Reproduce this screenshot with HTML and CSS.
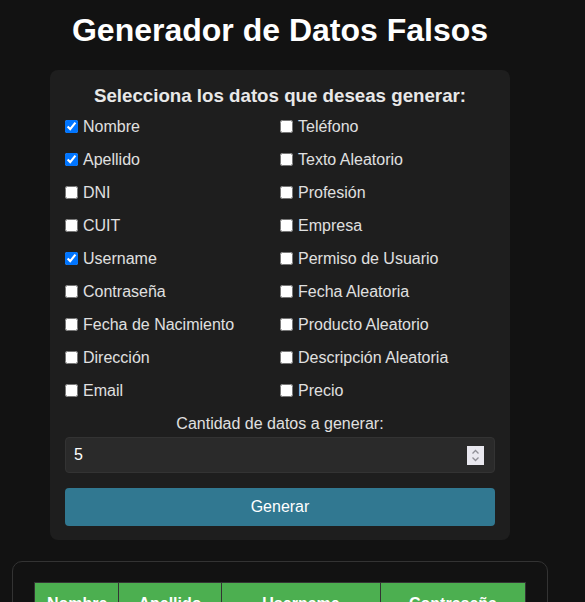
FILE: index.html
```html
<!DOCTYPE html>
<html lang="es">
<head>
<meta charset="utf-8">
<title>Generador de Datos Falsos</title>
<link rel="stylesheet" href="styles.css">
</head>
<body>
<div class="page">
  <h1 class="title">Generador de Datos Falsos</h1>
  <form class="card">
    <h2 class="card-title">Selecciona los datos que deseas generar:</h2>
    <div class="options">
      <label class="opt"><input type="checkbox" checked>Nombre</label>
      <label class="opt"><input type="checkbox">Teléfono</label>
      <label class="opt"><input type="checkbox" checked>Apellido</label>
      <label class="opt"><input type="checkbox">Texto Aleatorio</label>
      <label class="opt"><input type="checkbox">DNI</label>
      <label class="opt"><input type="checkbox">Profesión</label>
      <label class="opt"><input type="checkbox">CUIT</label>
      <label class="opt"><input type="checkbox">Empresa</label>
      <label class="opt"><input type="checkbox" checked>Username</label>
      <label class="opt"><input type="checkbox">Permiso de Usuario</label>
      <label class="opt"><input type="checkbox">Contraseña</label>
      <label class="opt"><input type="checkbox">Fecha Aleatoria</label>
      <label class="opt"><input type="checkbox">Fecha de Nacimiento</label>
      <label class="opt"><input type="checkbox">Producto Aleatorio</label>
      <label class="opt"><input type="checkbox">Dirección</label>
      <label class="opt"><input type="checkbox">Descripción Aleatoria</label>
      <label class="opt"><input type="checkbox">Email</label>
      <label class="opt"><input type="checkbox">Precio</label>
    </div>
    <label class="qty-label" for="qty">Cantidad de datos a generar:</label>
    <div class="qty-wrap">
      <input class="qty" id="qty" type="text" value="5">
      <span class="spin" aria-hidden="true">
        <svg width="17" height="19" viewBox="0 0 17 19"><rect width="17" height="19" fill="#e9e8ef"/><path d="M5.5 7.5 L8.5 4.5 L11.5 7.5" fill="none" stroke="#8f8e96" stroke-width="1.3"/><path d="M5.5 11.5 L8.5 14.5 L11.5 11.5" fill="none" stroke="#8f8e96" stroke-width="1.3"/></svg>
      </span>
    </div>
    <button class="btn" type="button">Generar</button>
  </form>
  <div class="results">
    <table class="tbl">
      <thead>
        <tr><th class="c1">Nombre</th><th class="c2">Apellido</th><th class="c3">Username</th><th class="c4">Contraseña</th></tr>
      </thead>
      <tbody>
        <tr><td>Lucía</td><td>Fernández</td><td>lucia.fernandez92</td><td>Xk8#pQ2m</td></tr>
        <tr><td>Martín</td><td>González</td><td>mgonzalez_77</td><td>Tr4$wZ9a</td></tr>
        <tr><td>Sofía</td><td>Rodríguez</td><td>sofi.rod</td><td>Lp0!vB6n</td></tr>
        <tr><td>Juan</td><td>Pérez</td><td>juanperez88</td><td>Qa7&amp;yH3c</td></tr>
        <tr><td>Valentina</td><td>López</td><td>vale_lopez</td><td>Mn5*eR1t</td></tr>
      </tbody>
    </table>
  </div>
</div>
</body>
</html>
```
FILE: styles.css
```css
* { box-sizing: border-box; }
html, body { margin: 0; padding: 0; background: #121212; }
body {
  font-family: "Liberation Sans", Arial, sans-serif;
  color: #e0e0e0;
  font-size: 16px;
}
.page {
  width: 560px;
  padding-bottom: 40px;
}
.title {
  margin: 12px 0 21px;
  font-size: 32px;
  line-height: 37px;
  font-weight: bold;
  color: #ffffff;
  text-align: center;
}
.card {
  width: 460px;
  margin: 0 auto;
  padding: 15px 15px 14px;
  background: #1e1e1e;
  border-radius: 8px;
  display: flex;
  flex-direction: column;
}
.card-title {
  margin: 0 0 10px;
  font-size: 18.72px;
  line-height: 22px;
  font-weight: bold;
  text-align: center;
  color: #e8e8e8;
}
.options {
  display: grid;
  grid-template-columns: 215px 215px;
  row-gap: 14px;
}
.opt {
  display: flex;
  align-items: center;
  gap: 5px;
  line-height: 19px;
  color: #e0e0e0;
}
.opt input {
  margin: 0;
  width: 13px;
  height: 13px;
}
.qty-label {
  margin: 15px 0 4px;
  text-align: center;
  line-height: 18px;
  color: #e0e0e0;
}
.qty-wrap {
  position: relative;
}
.qty {
  display: block;
  width: 100%;
  height: 36px;
  padding: 0 8px;
  background: #2a2a2a;
  border: 1px solid #333;
  border-radius: 4px;
  color: #ffffff;
  font-family: inherit;
  font-size: 16px;
  outline: none;
}
.spin {
  position: absolute;
  right: 11px;
  top: 9px;
  width: 17px;
  height: 19px;
  display: block;
  line-height: 0;
}
.btn {
  margin-top: 15px;
  height: 38px;
  background: #317891;
  border: none;
  border-radius: 4px;
  color: #ffffff;
  font-family: inherit;
  font-size: 16px;
}
.results {
  width: 536px;
  margin: 21px 0 0 12px;
  padding: 20px 22px 20px 21px;
  border: 1px solid #333;
  border-radius: 10px;
  background: #121212;
}
.tbl {
  border-collapse: collapse;
  width: 491px;
  table-layout: fixed;
}
.tbl th, .tbl td {
  border: 1px solid #333;
  padding: 12px;
  text-align: center;
}
.tbl th {
  background: #4caf50;
  color: #ffffff;
  font-weight: bold;
}
.c1 { width: 84px; }
.c2 { width: 103px; }
.c3 { width: 159px; }
.c4 { width: 145px; }
```
